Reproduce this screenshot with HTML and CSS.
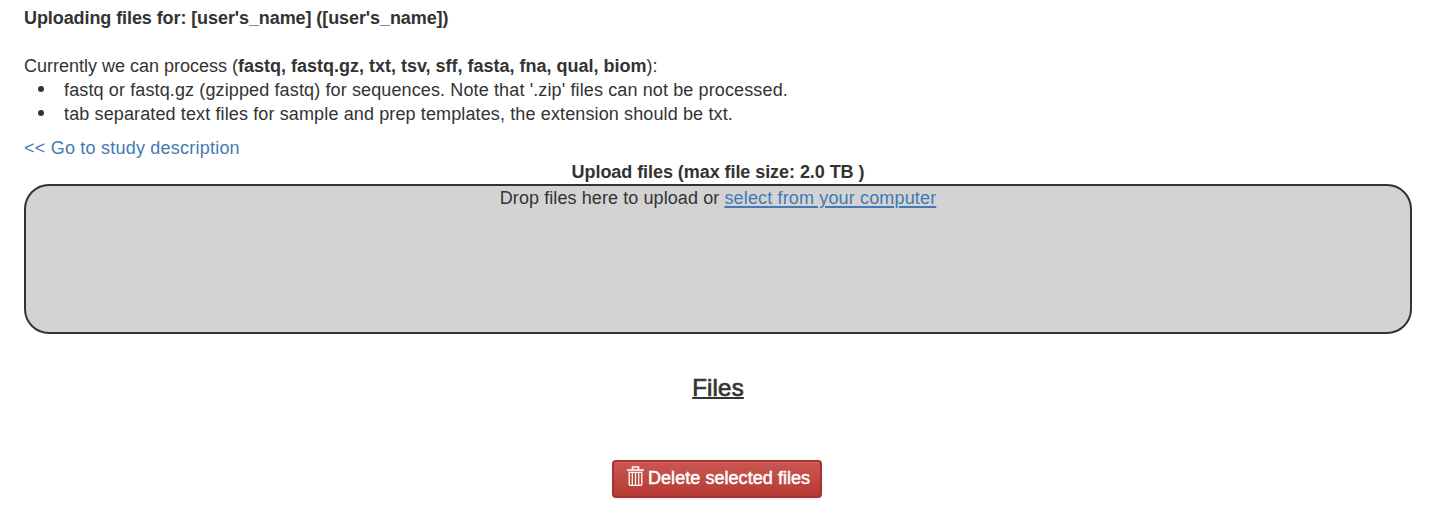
FILE: index.html
```html
<!DOCTYPE html>
<html lang="en">
<head>
<meta charset="utf-8">
<title>Upload files</title>
<link rel="stylesheet" href="styles.css">
</head>
<body>
<main class="page">
  <div class="title"><b>Uploading files for: [user's_name] ([user's_name])</b></div>
  <div class="intro">Currently we can process (<b>fastq, fastq.gz, txt, tsv, sff, fasta, fna, qual, biom</b>):</div>
  <ul class="notes">
    <li>fastq or fastq.gz (gzipped fastq) for sequences. Note that '.zip' files can not be processed.</li>
    <li>tab separated text files for sample and prep templates, the extension should be txt.</li>
  </ul>
  <div class="back"><a>&lt;&lt; Go to study description</a></div>
  <div class="upload-title"><b>Upload files (max file size: 2.0 TB )</b></div>
  <div class="drop">Drop files here to upload or <a class="select">select from your computer</a></div>
  <h3 class="files">Files</h3>
  <button class="delete" type="button">
    <svg class="trash" viewBox="0 0 17 20" width="17" height="20" fill="none" stroke="#fff"><path d="M0 4h17M5.500 4V1h6v3" stroke-width="1.500"/><path d="M2.200 5.500v12.800q0 1 1 1h10.600q1 0 1-1V5.500M1.600 6.300h13.800" stroke-width="1.300"/><path d="M5.300 6v13M8.500 6v13M11.700 6v13" stroke-width="1.200"/></svg>
    <span>Delete selected files</span>
  </button>
</main>
</body>
</html>
```
FILE: styles.css
```css
body { margin: 0; background: #fff; color: #333; font: 18px/24px "Liberation Sans", Arial, sans-serif; }
.page { height: 516px; box-sizing: border-box; padding: 6px 20px 0 24px; overflow: hidden; white-space: nowrap; }
.title { letter-spacing: -0.085px; }
.intro { margin-top: 24px; letter-spacing: -0.003px; }
.notes { margin: 0 0 10px; padding: 0; list-style: none; letter-spacing: 0.125px; }
.notes li { display: flex; align-items: center; }
.notes li::before { content: ""; flex: none; width: 6px; height: 6px; margin: 0 20px 2px 14px; border-radius: 50%; background: #333; }
.back { letter-spacing: 0.22px; }
.back a, .select { color: #4479b3; }
.upload-title { text-align: center; letter-spacing: -0.06px; }
.drop { height: 150px; box-sizing: border-box; border: 2px solid #333; border-radius: 25px; background: #d3d3d3; text-align: center; letter-spacing: 0.09px; }
.select { text-decoration: underline; text-decoration-thickness: 2px; text-underline-offset: 2px; letter-spacing: 0.15px; }
.files { margin: 41px 0 0; font-size: 24px; line-height: 26px; font-weight: 500; text-align: center; text-decoration: underline; text-decoration-thickness: 2px; letter-spacing: 0.2px; -webkit-text-stroke: 0.7px #333; }
.delete { display: flex; align-items: center; box-sizing: border-box; width: 210px; height: 38px; margin: 59px 0 0 588px; padding: 0 0 3px 13px; border: 2px solid #a9322d; border-radius: 4px; background: linear-gradient(#cb5752, #b53a33); box-shadow: inset 0 1px 0 rgba(255, 255, 255, 0.12), 0 1px 2px rgba(0, 0, 0, 0.07); color: #fff; font: 18px/24px "Liberation Sans", Arial, sans-serif; letter-spacing: 0.05px; -webkit-text-stroke: 0.5px #fff; }
.trash { margin: 0 4px 3px 0; }
```
